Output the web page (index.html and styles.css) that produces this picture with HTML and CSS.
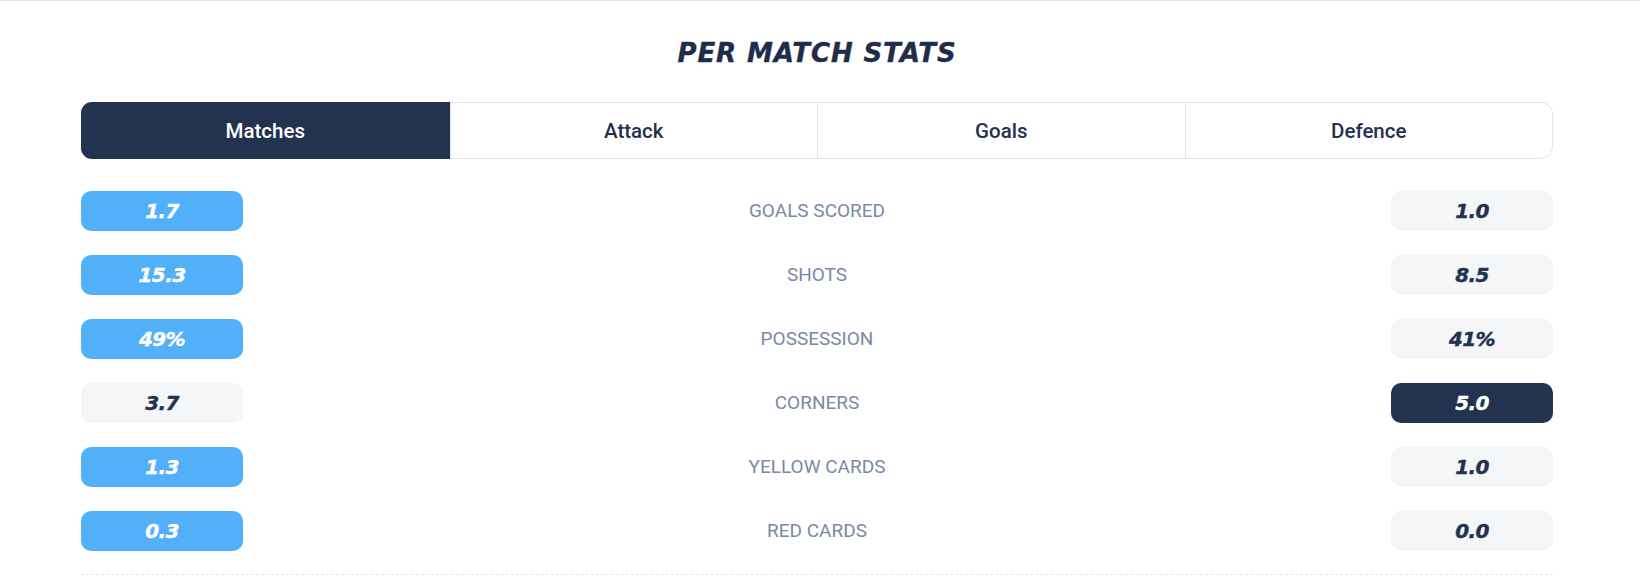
FILE: index.html
```html
<!DOCTYPE html>
<html>
<head>
<meta charset="utf-8">
<link rel="stylesheet" href="styles.css">
</head>
<body>
<div class="page">
  <div class="wrap">
    <h2 class="title">PER MATCH STATS</h2>
    <div class="tabs">
      <div class="tab active">Matches</div>
      <div class="tab">Attack</div>
      <div class="tab">Goals</div>
      <div class="tab">Defence</div>
    </div>
    <div class="stats">
      <div class="pill blue">1.7</div><div class="label">GOALS SCORED</div><div class="pill gray">1.0</div>
      <div class="pill blue">15.3</div><div class="label">SHOTS</div><div class="pill gray">8.5</div>
      <div class="pill blue">49%</div><div class="label">POSSESSION</div><div class="pill gray">41%</div>
      <div class="pill gray">3.7</div><div class="label">CORNERS</div><div class="pill navy">5.0</div>
      <div class="pill blue">1.3</div><div class="label">YELLOW CARDS</div><div class="pill gray">1.0</div>
      <div class="pill blue">0.3</div><div class="label">RED CARDS</div><div class="pill gray">0.0</div>
    </div>
    <div class="rule"></div>
  </div>
</div>
</body>
</html>
```
FILE: styles.css
```css
* { box-sizing: border-box; }
html, body { margin: 0; padding: 0; background: #fff; }
.page {
  border-top: 1px solid #e4e4e4;
  padding-left: 81px;
}
.wrap {
  width: 1472px;
  display: flex;
  flex-direction: column;
}
.title {
  margin: 37px 0 0;
  height: 30px;
  line-height: 30px;
  text-align: center;
  font-family: "DejaVu Sans", sans-serif;
  font-weight: bold;
  font-style: italic;
  font-size: 26px;
  letter-spacing: 0.9px;
  color: #1f2d4b;
  -webkit-text-stroke: 0.4px #1f2d4b;
}
.tabs {
  margin-top: 34px;
  display: grid;
  grid-template-columns: repeat(4, 1fr);
  height: 57px;
  border: 1px solid #e1e4e8;
  border-radius: 12px;
}
.tab {
  display: flex;
  align-items: center;
  justify-content: center;
  font-family: Roboto, "Liberation Sans", sans-serif;
  font-weight: 500;
  font-size: 20.5px;
  color: #22314f;
  border-left: 1px solid #e1e4e8;
}
.tab:first-child { border-left: none; }
.tab.active {
  background: #22324f;
  color: #fff;
  border-radius: 11px 0 0 11px;
  margin: -1px 0 -1px -1px;
}
.stats {
  margin-top: 32px;
  display: grid;
  grid-template-columns: 162px 1fr 162px;
  grid-auto-rows: 40px;
  row-gap: 24px;
}
.pill {
  display: flex;
  align-items: center;
  justify-content: center;
  border-radius: 10px;
  font-family: "DejaVu Sans", sans-serif;
  font-weight: bold;
  font-style: italic;
  font-size: 20px;
  letter-spacing: -0.6px;
}
.pill.blue { background: #52b0f9; color: #fff; -webkit-text-stroke: 0.4px #fff; }
.pill.gray { background: #f4f6f8; color: #22314f; -webkit-text-stroke: 0.4px #22314f; }
.pill.navy { background: #22324f; color: #fff; -webkit-text-stroke: 0.4px #fff; }
.label {
  display: flex;
  align-items: center;
  justify-content: center;
  padding-bottom: 1px;
  font-family: Roboto, "Liberation Sans", sans-serif;
  font-size: 19px;
  color: #7a89a6;
}
.rule {
  margin-top: 23px;
  border-top: 1px dashed #e2e4e8;
}
```
